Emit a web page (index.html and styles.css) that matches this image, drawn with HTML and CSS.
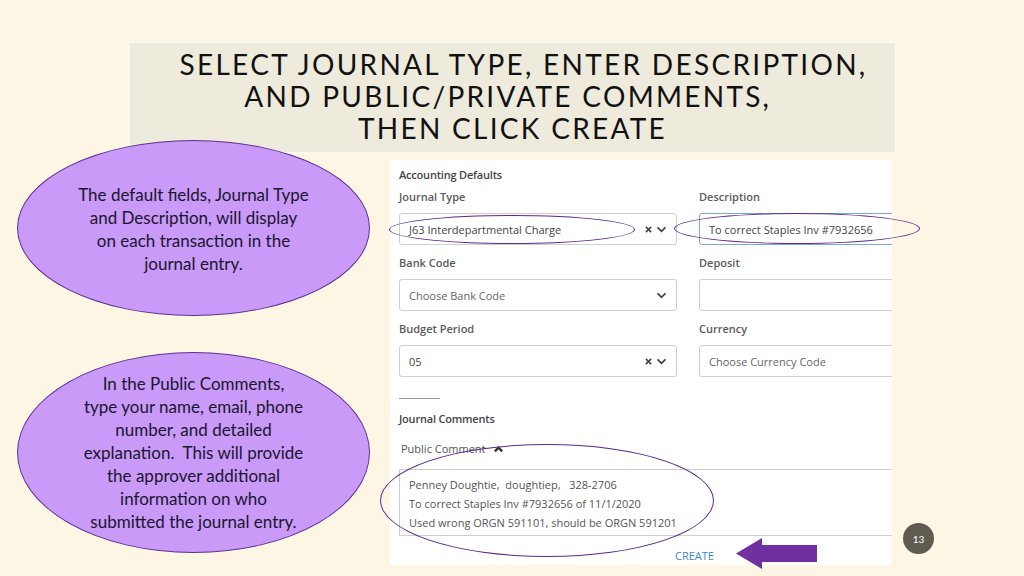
FILE: index.html
```html
<!DOCTYPE html>
<html>
<head>
<meta charset="utf-8">
<link rel="stylesheet" href="styles.css">
</head>
<body>
<div class="slide">
  <div class="title">
    <div class="t1">SELECT JOURNAL TYPE, ENTER DESCRIPTION,</div>
    <div>AND PUBLIC/PRIVATE COMMENTS,&nbsp;</div>
    <div>THEN CLICK CREATE</div>
  </div>

  <div class="content">
    <div class="shot">
      <div class="cols">
        <div class="col">
          <div class="section-label">Accounting Defaults</div>
          <div class="label">Journal Type</div>
          <div class="input">
            <span class="val">J63 Interdepartmental Charge</span>
            <span class="icons">
              <svg class="x" viewBox="0 0 8 8" width="7" height="7"><path d="M1 1L7 7M7 1L1 7" stroke="#444" stroke-width="1.8"/></svg>
              <svg class="chev" viewBox="0 0 12 8" width="11" height="7"><path d="M1.5 1.5L6 6L10.5 1.5" fill="none" stroke="#444" stroke-width="2"/></svg>
            </span>
          </div>
          <div class="label">Bank Code</div>
          <div class="input">
            <span class="val ph">Choose Bank Code</span>
            <span class="icons">
              <svg class="chev" viewBox="0 0 12 8" width="11" height="7"><path d="M1.5 1.5L6 6L10.5 1.5" fill="none" stroke="#444" stroke-width="2"/></svg>
            </span>
          </div>
          <div class="label">Budget Period</div>
          <div class="input">
            <span class="val">05</span>
            <span class="icons">
              <svg class="x" viewBox="0 0 8 8" width="7" height="7"><path d="M1 1L7 7M7 1L1 7" stroke="#444" stroke-width="1.8"/></svg>
              <svg class="chev" viewBox="0 0 12 8" width="11" height="7"><path d="M1.5 1.5L6 6L10.5 1.5" fill="none" stroke="#444" stroke-width="2"/></svg>
            </span>
          </div>
        </div>
        <div class="col">
          <div class="section-label">&nbsp;</div>
          <div class="label">Description</div>
          <div class="input focus open"><span class="val">To correct Staples Inv #7932656</span></div>
          <div class="label">Deposit</div>
          <div class="input open"></div>
          <div class="label">Currency</div>
          <div class="input open"><span class="val ph">Choose Currency Code</span></div>
        </div>
      </div>
      <div class="sep"></div>
      <div class="section-label jc">Journal Comments</div>
      <div class="pc">Public Comment
        <svg viewBox="0 0 12 8" width="11" height="8"><path d="M2 6.5L6 2.5L10 6.5" fill="none" stroke="#333" stroke-width="2.6"/></svg>
      </div>
      <div class="textarea">
        <div>Penney Doughtie,&nbsp; doughtiep,&nbsp;&nbsp; 328-2706</div>
        <div>To correct Staples Inv #7932656 of 11/1/2020</div>
        <div>Used wrong ORGN 591101, should be ORGN 591201</div>
      </div>
      <div class="actions"><span class="create">CREATE</span></div>
    </div>
  </div>

  <div class="callout c1">
    <p>The default fields, Journal Type<br>and Description, will display<br>on each transaction in the<br>journal entry.</p>
  </div>
  <div class="callout c2">
    <p>In the Public Comments,<br>type your name, email, phone<br>number, and detailed<br>explanation.&nbsp; This will provide<br>the approver additional<br>information on who<br>submitted the journal entry.</p>
  </div>

  <div class="ring r1"></div>
  <div class="ring r2"></div>
  <div class="ring r3"></div>

  <svg class="arrow" viewBox="0 0 82 31" width="82" height="31">
    <polygon points="0,15.5 26,0 26,7 81,7 81,24 26,24 26,31" fill="#7030a0"/>
  </svg>

  <div class="pagenum">13</div>
</div>
</body>
</html>
```

FILE: styles.css
```css
* { box-sizing: border-box; }
html, body { margin: 0; padding: 0; }
body { width: 1024px; height: 576px; overflow: hidden; }

.slide {
  position: relative;
  width: 1024px;
  height: 576px;
  background: #fdf6e4;
  overflow: hidden;
  font-family: "Lato", "Open Sans", sans-serif;
}

.title {
  margin: 41px 0 0 128px;
  width: 769px;
  height: 113px;
  background: #eeeadc;
  border: 2px solid #faf8f0;
  padding-top: 5px;
  text-align: center;
  font-family: "Lato", sans-serif;
  font-size: 28px;
  letter-spacing: 2.3px;
  line-height: 32px;
  color: #111;
}
.title .t1 { padding-left: 22px; }

.content {
  display: flex;
  padding-left: 390px;
  margin-top: 6px;
}

.shot {
  width: 502px;
  height: 405px;
  background: #fff;
  overflow: hidden;
  padding: 7px 0 0 9px;
  font-family: "Open Sans", sans-serif;
  font-size: 11px;
  color: #555;
}

.cols {
  display: flex;
  gap: 22px;
  width: 600px;
}
.col { width: 278px; flex: none; }

.section-label {
  font-weight: 600;
  color: #444;
  height: 16px;
  line-height: 16px;
  letter-spacing: -0.2px;
}
.label {
  font-weight: 600;
  color: #5a5a5a;
  line-height: 16px;
  height: 16px;
  margin-top: 6px;
  margin-bottom: 8px;
}
.input + .label { margin-top: 10px; }

.input {
  height: 32px;
  border: 1px solid #cfcfcf;
  border-radius: 3px;
  display: flex;
  align-items: center;
  padding: 0 9px;
  color: #444;
}
.input .val { flex: 1; }
.input .ph { color: #666; }
.input .icons { display: flex; align-items: center; gap: 4px; }
.input.focus { border-color: #7aa9d6; }
.input.open { border-radius: 3px 0 0 3px; }

.sep {
  width: 41px;
  height: 1px;
  background: #9a9a9a;
  margin-top: 21px;
}
.jc { margin-top: 12px; }

.pc {
  margin-top: 14px;
  padding-left: 2px;
  height: 16px;
  line-height: 16px;
  color: #555;
  display: flex;
  align-items: center;
  gap: 7px;
}

.textarea {
  margin-top: 12px;
  height: 67px;
  border: 1px solid #cfcfcf;
  border-right: none;
  padding: 5px 0 0 9px;
  line-height: 19px;
  color: #555;
}

.actions {
  padding-left: 276px;
  margin-top: 12px;
}
.create {
  color: #3b86c9;
  font-size: 11px;
}

.callout {
  position: absolute;
  left: 17px;
  width: 353px;
  background: #c99af7;
  border: 1px solid #5e3290;
  border-radius: 50%;
  display: flex;
  justify-content: center;
  font-family: "Lato", sans-serif;
  font-size: 17px;
  line-height: 23px;
  color: #1b1530;
  text-align: center;
}
.callout p { margin: 0; white-space: nowrap; }
.c1 { top: 140px; height: 176px; padding-top: 42px; }
.c2 { top: 352px; height: 201px; padding-top: 19px; }

.ring {
  position: absolute;
  border: 1.4px solid #5b2a90;
  border-radius: 50%;
}
.r1 { left: 389px; top: 215px; width: 246px; height: 29px; }
.r2 { left: 674px; top: 213px; width: 246px; height: 31px; }
.r3 { left: 380px; top: 444px; width: 334px; height: 113px; }

.arrow {
  position: absolute;
  left: 736px;
  top: 538px;
}

.pagenum {
  position: absolute;
  left: 903px;
  top: 523px;
  width: 31px;
  height: 31px;
  border-radius: 50%;
  background: #5f5b50;
  color: #fff;
  font-family: "Lato", sans-serif;
  font-size: 10px;
  display: flex;
  align-items: center;
  justify-content: center;
}
```
